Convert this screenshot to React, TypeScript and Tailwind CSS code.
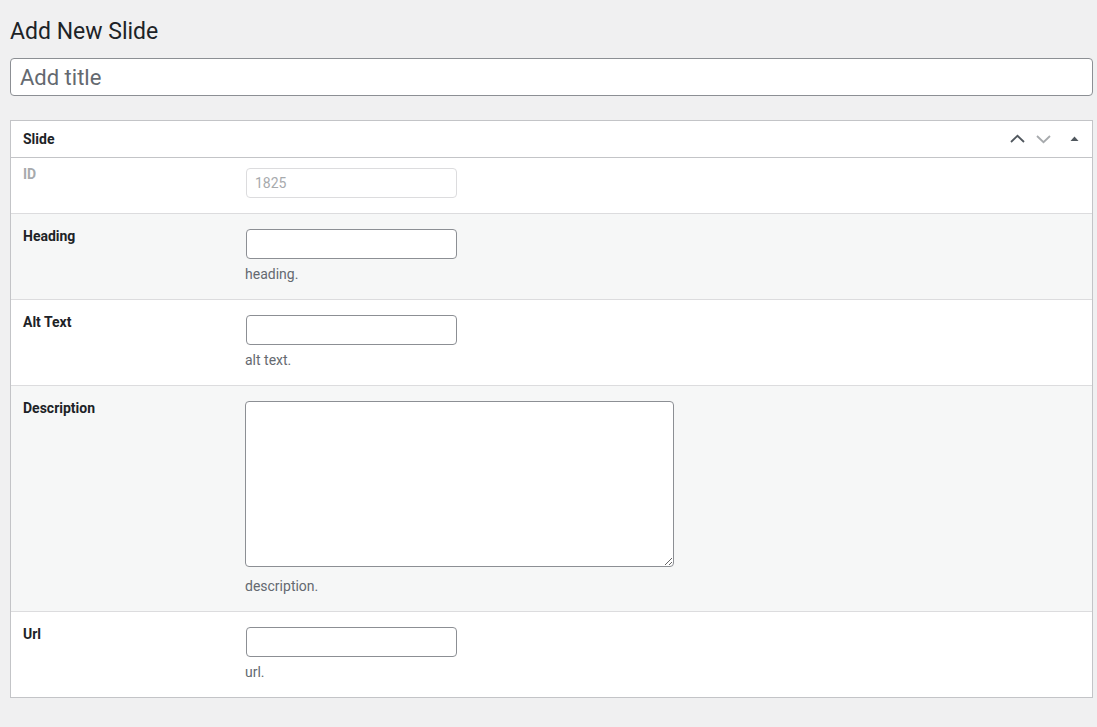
import React from "react";

const labelCls = "w-[234px] shrink-0 pl-3 text-[14px] font-bold text-[#1d2327] leading-[20px]";
const inputCls = "ml-px w-[211px] h-[30px] rounded-[4px] border border-[#8c8f94] bg-white px-2 text-[14px]";
const descCls = "mt-[5px] text-[14px] leading-[20px] text-[#646970]";

function FieldRow({ label, desc, alt }: { label: string; desc: string; alt?: boolean }) {
  return (
    <div className={`flex border-t border-[#dcdcde] pb-[15px] ${alt ? "bg-[#f6f7f7]" : "bg-white"}`}>
      <div className={`${labelCls} pt-[12px]`}>{label}</div>
      <div className="flex flex-col pt-[15px]">
        <input className={inputCls} />
        <p className={descCls}>{desc}</p>
      </div>
    </div>
  );
}

export default function App() {
  return (
    <div className="min-h-[727px] bg-[#f0f0f1] pl-[10px] pr-[4px] pt-[16px] pb-[28px] font-['Roboto',sans-serif] text-[#1d2327]">
      <h1 className="text-[23px] leading-[31px] font-normal text-[#1d2327]">Add New Slide</h1>
      <input
        placeholder="Add title"
        className="mt-[11px] block w-full h-[38px] rounded-[4px] border border-[#8c8f94] bg-white px-[9px] text-[22px] placeholder:text-[#646970]"
      />

      <div className="mt-[24px] border border-[#c3c4c7] bg-white">
        <div className="flex h-[36px] items-center justify-between pl-3 pr-[13px]">
          <h2 className="text-[14px] font-bold leading-[20px]">Slide</h2>
          <div className="flex items-center">
            <svg width="15" height="10" viewBox="0 0 15 10" className="mr-[11px]">
              <path d="M1 8 L7.5 1.8 L14 8" fill="none" stroke="#50575e" strokeWidth="1.8" />
            </svg>
            <svg width="15" height="10" viewBox="0 0 15 10" className="mr-[19px]">
              <path d="M1 2 L7.5 8.2 L14 2" fill="none" stroke="#a7aaad" strokeWidth="1.8" />
            </svg>
            <svg width="9" height="8" viewBox="0 0 9 8">
              <path d="M0.5 6 L4.5 1.5 L8.5 6 Z" fill="#50575e" />
            </svg>
          </div>
        </div>

        <div className="flex border-t border-[#c3c4c7] bg-white pt-[10px] pb-[15px]">
          <div className={`${labelCls} -mt-[4px] text-[#a7aaad]`}>ID</div>
          <input
            disabled
            value="1825"
            className="ml-px w-[211px] h-[30px] rounded-[4px] border border-[#dcdcde] bg-white px-[8px] text-[14px] text-[#a7aaad]"
          />
        </div>

        <FieldRow label="Heading" desc="heading." alt />
        <FieldRow label="Alt Text" desc="alt text." />

        <div className="flex border-t border-[#dcdcde] bg-[#f6f7f7] pb-[15px]">
          <div className={`${labelCls} pt-[12px]`}>Description</div>
          <div className="flex flex-col pt-[15px]">
            <textarea className="block w-[429px] h-[166px] mb-[4px] rounded-[4px] border border-[#8c8f94] bg-white px-2 text-[14px]" />
            <p className={descCls}>description.</p>
          </div>
        </div>

        <FieldRow label="Url" desc="url." />
      </div>
    </div>
  );
}
